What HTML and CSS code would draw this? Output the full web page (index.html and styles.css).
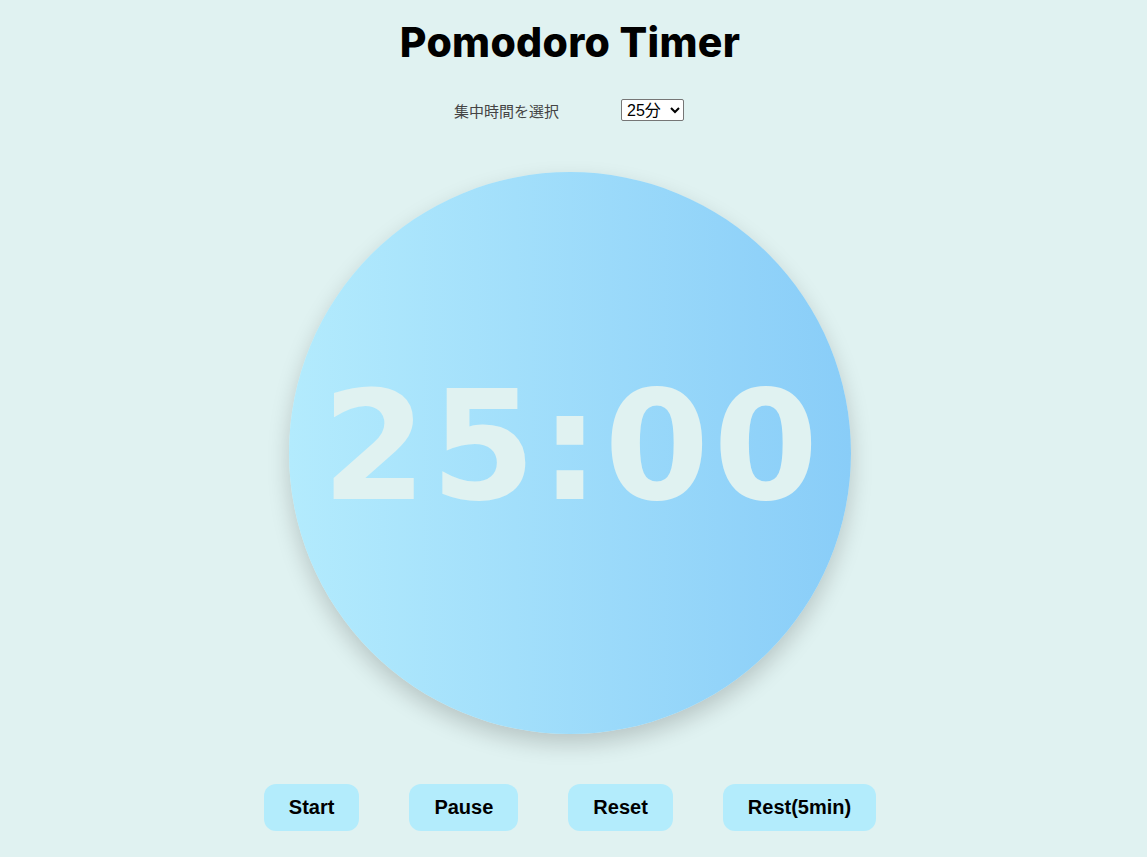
FILE: index.html
```html
<!DOCTYPE html>
<html lang="ja">
<head>
<meta charset="utf-8">
<title>Pomodoro Timer</title>
<link rel="stylesheet" href="styles.css">
</head>
<body>
<div class="app">
  <h1 class="title">Pomodoro Timer</h1>
  <div class="setting">
    <label class="setting-label" for="focus">集中時間を選択</label>
    <select id="focus" class="setting-select">
      <option>25分</option>
    </select>
  </div>
  <div class="clock">
    <span class="clock-time">25:00</span>
  </div>
  <div class="controls">
    <button class="btn">Start</button>
    <button class="btn">Pause</button>
    <button class="btn">Reset</button>
    <button class="btn">Rest(5min)</button>
  </div>
</div>
</body>
</html>
```
FILE: styles.css
```css
html, body {
  margin: 0;
  padding: 0;
}
body {
  background: #e0f2f1;
  font-family: "Liberation Sans", Arial, sans-serif;
  width: 1147px;
  height: 857px;
  overflow: hidden;
}
.app {
  display: flex;
  flex-direction: column;
  align-items: center;
  padding-right: 7px;
}
.title {
  font-family: "Inter", "Noto Sans", sans-serif;
  font-weight: 800;
  font-size: 41px;
  line-height: 1;
  margin: 22px 0 0 0;
  color: #000;
  letter-spacing: 0.3px;
}
.setting {
  display: flex;
  align-items: center;
  gap: 62px;
  margin-top: 36px;
  margin-left: -2px;
}
.setting-label {
  font-family: "Liberation Sans", "Noto Sans CJK JP", sans-serif;
  font-size: 15px;
  color: #444;
}
.setting-select {
  font-family: "Liberation Sans", "Noto Sans CJK JP", sans-serif;
  font-size: 16px;
  height: 22px;
  width: 63px;
  padding: 0 1px;
  border: 1px solid #767676;
  border-radius: 2px;
  background: #fff;
  color: #000;
}
.clock {
  margin-top: 51px;
  width: 562px;
  height: 562px;
  border-radius: 50%;
  background: linear-gradient(to right, #b3ebfd, #89cdf8);
  box-shadow: 0 10px 22px rgba(0, 0, 0, 0.18);
  display: flex;
  align-items: center;
  justify-content: center;
}
.clock-time {
  font-family: "DejaVu Sans", sans-serif;
  font-weight: bold;
  font-size: 151px;
  letter-spacing: 4px;
  color: #e0f2f1;
  line-height: 1;
  margin-top: -12px;
  margin-left: 4px;
}
.controls {
  display: flex;
  gap: 50px;
  margin-top: 50px;
}
.btn {
  font-family: "Liberation Sans", Arial, sans-serif;
  font-weight: bold;
  font-size: 20px;
  color: #000;
  background: #b3ecfc;
  border: none;
  border-radius: 12px;
  height: 47px;
  padding: 0 25px;
  cursor: pointer;
}
```
